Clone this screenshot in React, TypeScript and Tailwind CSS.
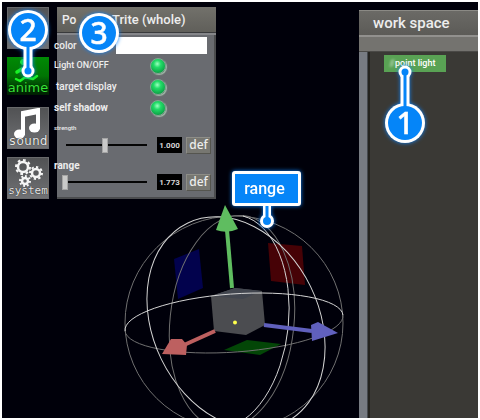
import type { ReactNode } from "react";

const font = "font-['Roboto','Liberation_Sans',sans-serif]";
const glow = "drop-shadow-[0_0_2px_#0a84ff]";

function Pin({ n, className, stem, reach = 41 }: { n: number; className: string; stem?: "up" | "down"; reach?: number }) {
  const tip = 20 + reach;
  return (
    <div className={`pointer-events-none absolute z-10 h-10 w-10 ${glow} ${className}`}>
      <svg className="absolute inset-0 overflow-visible" width="40" height="40" viewBox="0 0 40 40" aria-hidden="true">
        <g transform={stem === "up" ? "rotate(180 20 20)" : undefined}>
          {stem && <path d={`M20 36V${tip}`} stroke="#fff" strokeWidth="9" />}
          {stem && <circle cx="20" cy={tip} r="6.500" fill="#fff" />}
          <circle cx="20" cy="20" r="20" fill="#fff" />
          <circle cx="20" cy="20" r="17" fill="#0585f8" />
          {stem && <circle cx="20" cy={tip} r="3.500" fill="#0585f8" />}
          {stem && <path d={`M20 36V${tip}`} stroke="#0585f8" strokeWidth="3" />}
        </g>
      </svg>
      <span className="relative flex h-10 items-center justify-center font-['Noto_Sans',sans-serif] text-[30px] leading-none font-medium text-white [-webkit-text-stroke:0.5px_#fff]">
        {n}
      </span>
    </div>
  );
}

function Tool({ label, className, children }: { label: string; className: string; children?: ReactNode }) {
  return (
    <button
      aria-label={label || "object"}
      className={`relative flex w-[42px] items-end justify-center whitespace-nowrap ${className}`}
    >
      {children}
      <span className="relative leading-[14px] [text-shadow:0_0_1px_#000]">{label}</span>
    </button>
  );
}

const grey = "h-[42px] border border-[#68696b] bg-linear-to-b from-[#515254] to-[#707174] text-[#e8e8e8] font-['DejaVu_Sans_Mono',monospace]";

function Gear({ x, y, r }: { x: number; y: number; r: number }) {
  return (
    <g transform={`translate(${x} ${y})`} fill="none" stroke="#f5f5f5">
      <circle r={r - 2} strokeWidth="2.500" />
      <circle r={r} strokeWidth="2" pathLength="80" strokeDasharray="5 5" />
    </g>
  );
}

function Toolbar() {
  return (
    <nav className="relative z-10 flex w-[42px] shrink-0 flex-col">
      <Tool label="" className={grey} />
      <Tool label="anime" className="mt-2 h-[38px] bg-linear-to-b from-[#008a05] via-[#007503] to-[#001c02] text-[13px] text-[#35e536] font-['DejaVu_Sans',sans-serif]">
        <svg className="absolute top-0 left-0" width="42" height="38" viewBox="0 0 42 38" aria-hidden="true">
          <g fill="none" stroke="#1af421" strokeLinecap="round" strokeLinejoin="round">
            <circle cx="16" cy="5" r="2.500" fill="#1af421" />
            <path d="M15 12l5 2-1 6M15 12l-5 3" strokeWidth="3.500" />
            <path d="M18 20l8 2 4-3M17 21l-4 3-4-2" strokeWidth="2.500" />
          </g>
        </svg>
      </Tool>
      <Tool label="sound" className={`mt-3 text-[13px] ${grey}`}>
        <svg className="absolute top-0 left-0" width="40" height="40" viewBox="0 0 40 40" aria-hidden="true">
          <path d="M15 27V5l15-3v19M15 7l15-3" fill="none" stroke="#fff" strokeWidth="4" />
          <ellipse cx="11.500" cy="26" rx="5.500" ry="4.500" fill="#fff" />
          <ellipse cx="26.500" cy="20" rx="5.500" ry="4.500" fill="#fff" />
        </svg>
      </Tool>
      <Tool label="system" className={`mt-2 text-[11px] ${grey}`}>
        <svg className="absolute top-0 left-0" width="40" height="40" viewBox="0 0 40 40" aria-hidden="true">
          <Gear x={15} y={9} r={7} />
          <Gear x={28} y={15} r={6} />
          <Gear x={17} y={23} r={5} />
        </svg>
      </Tool>
    </nav>
  );
}

function Toggle({ label, className }: { label: string; className: string }) {
  return (
    <label className={`flex h-[21px] items-center justify-between pr-12 whitespace-nowrap ${className}`}>
      {label}
      <input
        type="checkbox"
        defaultChecked
        className="h-4 w-4 appearance-none rounded-full border border-[#7eaa91] bg-[radial-gradient(circle_at_45%_35%,#9effc0_0%,#22dc68_30%,#12b04e_65%,#087033_100%)] shadow-[1px_1px_1px_#a3bbaa]"
      />
    </label>
  );
}

function Slider({ id, value, min, max }: { id: string; value: string; min: number; max: number }) {
  return (
    <div className="flex h-[18px] items-center pr-[3px]">
      <input
        id={id}
        type="range"
        min={min}
        max={max}
        step="0.001"
        defaultValue={value}
        className="mr-2.5 ml-2 h-4 w-0 flex-1 appearance-none bg-[linear-gradient(#050505,#050505)] bg-[length:100%_2px] bg-center bg-no-repeat [&::-webkit-slider-thumb]:h-[15px] [&::-webkit-slider-thumb]:w-1.5 [&::-webkit-slider-thumb]:appearance-none [&::-webkit-slider-thumb]:border [&::-webkit-slider-thumb]:border-[#a5a5a5] [&::-webkit-slider-thumb]:bg-[#c9c9c9]"
      />
      <input
        aria-label={`${id} value`}
        defaultValue={value}
        className="h-4 w-[25px] bg-black text-center text-[8px] font-bold text-[#d8d8d8]"
      />
      <button
        aria-label={`default ${id}`}
        className="ml-1 h-[17px] w-[25px] border border-t-[#8d8d87] border-r-[#55554f] border-b-[#55554f] border-l-[#8d8d87] bg-[#777771] font-['Noto_Sans',sans-serif] text-[12px] leading-[14px] font-medium text-[#ededed]"
      >
        def
      </button>
    </div>
  );
}

function LightPanel() {
  return (
    <section className="relative ml-2 flex h-[192px] w-[159px] shrink-0 flex-col border-r-2 border-b-2 border-[#4b4c4e] bg-[#696b70] text-[#ededed]">
      <header className="-mr-0.5 flex h-[25px] shrink-0 items-center bg-linear-to-b from-[#72716b] to-[#605f5a] pl-[5px] whitespace-nowrap">
        <span className="w-[50px] text-[12px] font-medium">Po</span>
        <h2 className="text-[13px] font-medium">Trite (whole)</h2>
      </header>
      <div className="-mr-0.5 h-[3px] shrink-0 border-t border-[#393a3c] bg-[#85868a]" />
      <div className="-ml-[3px] flex flex-col">
        <label className="flex h-5 items-center justify-between pr-[7px] text-[10px] font-medium">
          color
          <input
            type="color"
            defaultValue="#ffffff"
            className="h-[17px] w-[91px] appearance-none bg-white p-0 [&::-webkit-color-swatch]:border-0 [&::-webkit-color-swatch-wrapper]:p-0"
          />
        </label>
        <Toggle label="Light ON/OFF" className="text-[9px] font-medium" />
        <Toggle label="target display" className="pl-0.5 text-[10px] font-medium" />
        <Toggle label="self shadow" className="text-[10px] font-bold" />
        <label htmlFor="strength" className="mt-1 h-3.5 text-[6px] leading-3 font-medium">strength</label>
        <div className="pl-1">
          <Slider id="strength" value="1.000" min={0} max={2.1} />
        </div>
        <label htmlFor="range" className="mt-1 h-[15px] text-[10px] leading-4 font-bold">range</label>
        <Slider id="range" value="1.773" min={1.7} max={100} />
      </div>
      <Pin n={3} className="top-[6px] left-[22px]" />
    </section>
  );
}

function Gizmo() {
  return (
    <svg className="absolute top-0 left-0" width="357" height="416" viewBox="2 2 357 416" role="img" aria-label="Point light range">
      <path d="M174 259L199 249L203 288L178 299Z" fill="#02024d" />
      <path d="M268 243L302 246L305 285L271 281Z" fill="#460206" />
      <path d="M224 350L247 340L281 344L260 355Z" fill="#034607" />
      <path d="M211 296L235 288L262 291L265 325L246 335L214 331Z" fill="#4b4c50" />
      <path d="M211 296L235 288L262 291L243 299Z" fill="#42464f" />
      <g fill="none" stroke="#707070">
        <ellipse cx="234" cy="323" rx="109" ry="107" />
        <ellipse cx="232" cy="322" rx="107" ry="62" transform="rotate(-84 232 322)" />
        <path d="M125 331A109 29 -4 0 0 343 315" />
      </g>
      <g fill="none" stroke="#d4d4d4">
        <path d="M243 216A107 62 -84 0 1 221 428" />
        <path d="M125 331A109 29 -4 0 1 343 315" />
        <ellipse cx="236" cy="323" rx="111" ry="83" transform="rotate(64 236 323)" />
      </g>
      <path d="M232 288L227 230" stroke="#5fbd60" strokeWidth="4" />
      <path d="M225 205L238 229Q227 234 216 230Z" fill="#5fbd60" />
      <path d="M215 331L184 345" stroke="#bd6060" strokeWidth="4" />
      <path d="M162 354L171 339L182 339L187 345L186 355Z" fill="#bd6060" />
      <path d="M264 325L312 331" stroke="#6060bd" strokeWidth="4" />
      <path d="M338 333L318 322L311 325L312 341Z" fill="#6060bd" />
      <circle cx="235" cy="322.500" r="2" fill="#ffff4c" />
    </svg>
  );
}

function RangeCallout() {
  return (
    <div className={`absolute top-[169px] left-[230px] z-10 h-[35px] w-[69px] ${glow}`}>
      <svg className="absolute top-[33px] left-[28px]" width="14" height="24" viewBox="0 0 14 24" aria-hidden="true">
        <path d="M7 0V16" stroke="#fff" strokeWidth="8" />
        <circle cx="7" cy="17" r="7" fill="#fff" />
        <path d="M7 0V17" stroke="#0585f8" strokeWidth="3" />
        <circle cx="7" cy="17" r="4" fill="#0585f8" />
      </svg>
      <div className="relative flex h-full items-center justify-center rounded-[3px] border-3 border-white bg-[#0585f8] pr-1 text-[16px] font-medium text-white">
        range
      </div>
    </div>
  );
}

function Workspace() {
  return (
    <aside className="mt-2 flex w-[119px] shrink-0 flex-col">
      <header className="flex h-[25px] shrink-0 items-center border-t border-[#8b8a85] bg-linear-to-b from-[#6b6a66] to-[#5c5b57] pl-3.5">
        <h2 className="text-[15px] font-medium whitespace-nowrap text-[#ededed]">work space</h2>
      </header>
      <div className="h-[17px] shrink-0 border-t-2 border-b border-t-[#92918e] border-b-[#4a4946] bg-[#74736f]" />
      <div className="flex flex-1">
        <div className="w-[9px] border-r border-[#45494e] bg-[#777b82]" />
        <div className="flex-1 border-l-2 border-[#24231f] bg-[#3a3935] pt-[3px] pl-3.5">
          <div className="relative h-[17px] w-[62px] bg-[#59a254]">
            <button className="flex h-full w-full items-center pl-[11px] text-[9px] font-medium whitespace-nowrap text-white">
              point light
            </button>
            <span className="absolute top-1 left-1.5 h-2 w-1 -skew-x-12 rounded-full bg-white/30 blur-[1px]" />
            <Pin n={1} stem="up" reach={51} className="top-12 left-px" />
          </div>
        </div>
      </div>
    </aside>
  );
}

export default function App() {
  return (
    <div className={`flex h-screen bg-white p-0.5 ${font}`}>
      <div className="flex min-w-0 flex-1 overflow-hidden bg-[#00000a]">
        <main className="relative flex min-w-0 flex-1 items-start pt-[5px] pl-[5px]">
          <Gizmo />
          <Toolbar />
          <LightPanel />
          <Pin n={2} stem="down" className="top-2 left-[6px]" />
          <RangeCallout />
        </main>
        <Workspace />
      </div>
    </div>
  );
}
